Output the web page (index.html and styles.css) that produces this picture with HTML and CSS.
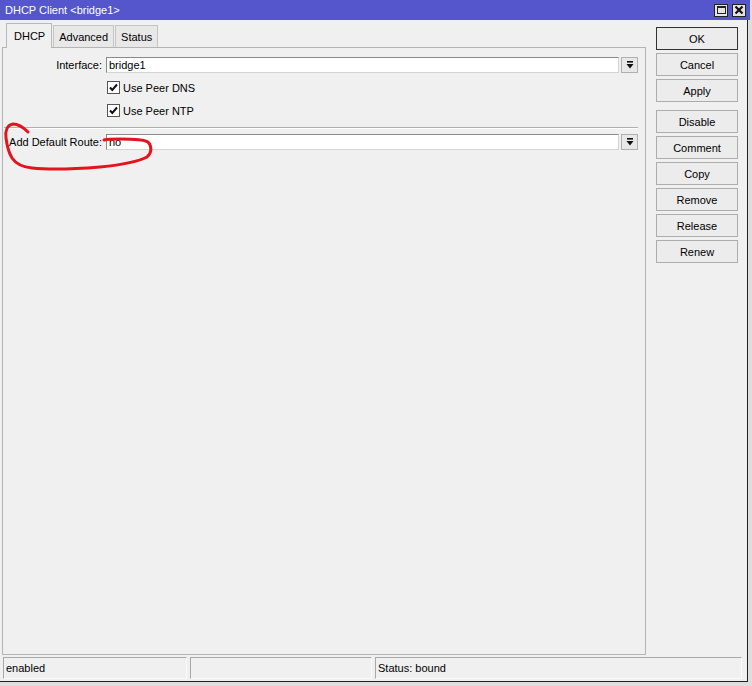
FILE: index.html
```html
<!DOCTYPE html>
<html lang="en">

<head>
    <meta charset="utf-8">
    <title>DHCP Client &lt;bridge1&gt;</title>
    <link rel="stylesheet" href="styles.css">
</head>

<body>

    <div class="window">
        <div class="titlebar">
            <span class="title">DHCP Client &lt;bridge1&gt;</span>
            <div class="winbtns">
                <span class="wb max"><span class="maxbox"></span></span>
                <span class="wb close">
                    <svg width="10" height="10" viewBox="0 0 10 10">
                        <path d="M1.5 1.5 L8.5 8.5 M8.5 1.5 L1.5 8.5" stroke="#111" stroke-width="2.2" />
                    </svg>
                </span>
            </div>
        </div>

        <div class="main">
            <div class="left">
                <nav class="tabs">
                    <span class="tab aktiv">DHCP</span>
                    <span class="tab">Advanced</span>
                    <span class="tab">Status</span>
                </nav>
                <section class="panel">
                    <div class="row">
                        <label>Interface:</label>
                        <div class="input">bridge1</div>
                        <span class="dd">
                            <svg width="10" height="10" viewBox="0 0 10 10">
                                <rect x="2" y="1" width="6" height="1.6" fill="#111" />
                                <path d="M1.5 4 L8.5 4 L5 8.5 Z" fill="#111" />
                            </svg>
                        </span>
                    </div>
                    <div class="check">
                        <span class="box">
                            <svg width="11" height="11" viewBox="0 0 11 11">
                                <path d="M2 5.5 L4.3 8 L9 2.5" fill="none" stroke="#111" stroke-width="2" />
                            </svg>
                        </span>
                        Use Peer DNS
                    </div>
                    <div class="check">
                        <span class="box">
                            <svg width="11" height="11" viewBox="0 0 11 11">
                                <path d="M2 5.5 L4.3 8 L9 2.5" fill="none" stroke="#111" stroke-width="2" />
                            </svg>
                        </span>
                        Use Peer NTP
                    </div>
                    <div class="sep"></div>
                    <div class="row">
                        <label>Add Default Route:</label>
                        <div class="input">no</div>
                        <span class="dd">
                            <svg width="10" height="10" viewBox="0 0 10 10">
                                <rect x="2" y="1" width="6" height="1.6" fill="#111" />
                                <path d="M1.5 4 L8.5 4 L5 8.5 Z" fill="#111" />
                            </svg>
                        </span>
                    </div>
                </section>
            </div>

            <aside class="side">
                <button class="knap standard">OK</button>
                <button class="knap">Cancel</button>
                <button class="knap">Apply</button>
                <button class="knap luft">Disable</button>
                <button class="knap">Comment</button>
                <button class="knap">Copy</button>
                <button class="knap">Remove</button>
                <button class="knap">Release</button>
                <button class="knap">Renew</button>
            </aside>
        </div>

        <footer class="statusbar">
            <span class="felt f1">enabled</span>
            <span class="felt f2"></span>
            <span class="felt f3">Status: bound</span>
        </footer>

        <svg class="scribble" width="170" height="180" viewBox="0 0 170 180">
            <path d="M28 132 C24 128 18 124 13 124 C7 125 5 131 6 138 C7 146 9 153 12 158 C16 164 22 167 32 168 C50 170 76 169 100 167 C120 165 138 162 147 157 C152 153 152 146 148 142 C143 139 132 139 120 139 C113 139 108 139 104 140"
                fill="none" stroke="#e3141c" stroke-width="3" stroke-linecap="round" />
        </svg>
    </div>

</body>

</html>
```

FILE: styles.css
```css
* {
    box-sizing: border-box;
}

body {
    margin: 0;
    width: 752px;
    height: 686px;
    overflow: hidden;
    background-color: #dedede;
    font-family: "Liberation Sans", Arial, sans-serif;
    font-size: 11px;
    color: #000;
}

.window {
    position: relative;
    width: 748px;
    height: 682px;
    background-color: #f0f0f0;
    border-right: 1px solid #222;
    border-bottom: 1px solid #222;
    display: flex;
    flex-direction: column;
}

.titlebar {
    height: 20px;
    background-color: #5555cc;
    color: #fff;
    display: flex;
    align-items: center;
    justify-content: space-between;
    padding-left: 5px;
    padding-right: 4px;
    margin-right: -3px;
    font-size: 11px;
}

.winbtns {
    display: flex;
    gap: 4px;
}

.wb {
    width: 14px;
    height: 13px;
    background-color: #e4e4e4;
    border: 1px solid #222;
    display: flex;
    align-items: center;
    justify-content: center;
}

.maxbox {
    width: 9px;
    height: 8px;
    border: 1px solid #222;
    border-top-width: 2px;
}

.main {
    height: 635px;
    display: flex;
}

.left {
    width: 646px;
    padding-left: 2px;
    display: flex;
    flex-direction: column;
}

.tabs {
    display: flex;
    align-items: flex-end;
    height: 27px;
    padding-left: 4px;
}

.tab {
    height: 22px;
    padding: 0 5px;
    line-height: 22px;
    background-color: #e8e8e8;
    border: 1px solid #c4c4c4;
    border-bottom: none;
    margin-right: 1px;
}

.tab.aktiv {
    height: 25px;
    line-height: 25px;
    padding: 0 6px 0 7px;
    background-color: #f0f0f0;
    border-color: #b8b8b8;
    margin-bottom: -1px;
    position: relative;
    z-index: 1;
}

.panel {
    height: 608px;
    border: 1px solid #b4b4b4;
    padding: 9px 7px 0 0;
}

.row {
    display: flex;
    align-items: center;
    height: 16px;
}

.row label {
    width: 99px;
    text-align: right;
    margin-right: 4px;
}

.input {
    flex: 1;
    height: 16px;
    background-color: #fff;
    border: 1px solid #8a8a8a;
    border-right-color: #d4d4d4;
    border-bottom-color: #d4d4d4;
    padding-left: 2px;
    line-height: 14px;
}

.dd {
    width: 17px;
    height: 16px;
    margin-left: 2px;
    background-color: #e8e8e8;
    border: 1px solid #b0b0b0;
    display: flex;
    align-items: center;
    justify-content: center;
}

.check {
    display: flex;
    align-items: center;
    height: 23px;
    padding-left: 104px;
}

.row + .check {
    margin-top: 3px;
}

.box {
    width: 13px;
    height: 13px;
    background-color: #fff;
    border: 1px solid #555;
    margin-right: 3px;
    display: flex;
    align-items: center;
    justify-content: center;
}

.sep {
    height: 2px;
    margin: 5px 0 5px 1px;
    border-top: 1px solid #b0b0b0;
    border-bottom: 1px solid #fff;
}

.side {
    flex: 1;
    display: flex;
    flex-direction: column;
    padding: 7px 0 0 10px;
}

.knap {
    width: 82px;
    height: 23px;
    margin-bottom: 3px;
    padding: 0;
    background-color: #ececec;
    border: 1px solid #adadad;
    font-family: "Liberation Sans", Arial, sans-serif;
    font-size: 11px;
    color: #000;
}

.knap.standard {
    border-color: #333;
}

.knap.luft {
    margin-top: 5px;
}

.statusbar {
    display: flex;
    height: 22px;
    margin-top: 2px;
    padding-left: 3px;
}

.felt {
    height: 22px;
    border: 1px solid #a8a8a8;
    border-right-color: #fafafa;
    border-bottom-color: #fafafa;
    padding-left: 2px;
    line-height: 20px;
    margin-right: 3px;
}

.f1 {
    width: 184px;
}

.f2 {
    width: 182px;
}

.f3 {
    width: 367px;
}

.scribble {
    position: absolute;
    top: 0;
    left: 0;
    pointer-events: none;
}
```
